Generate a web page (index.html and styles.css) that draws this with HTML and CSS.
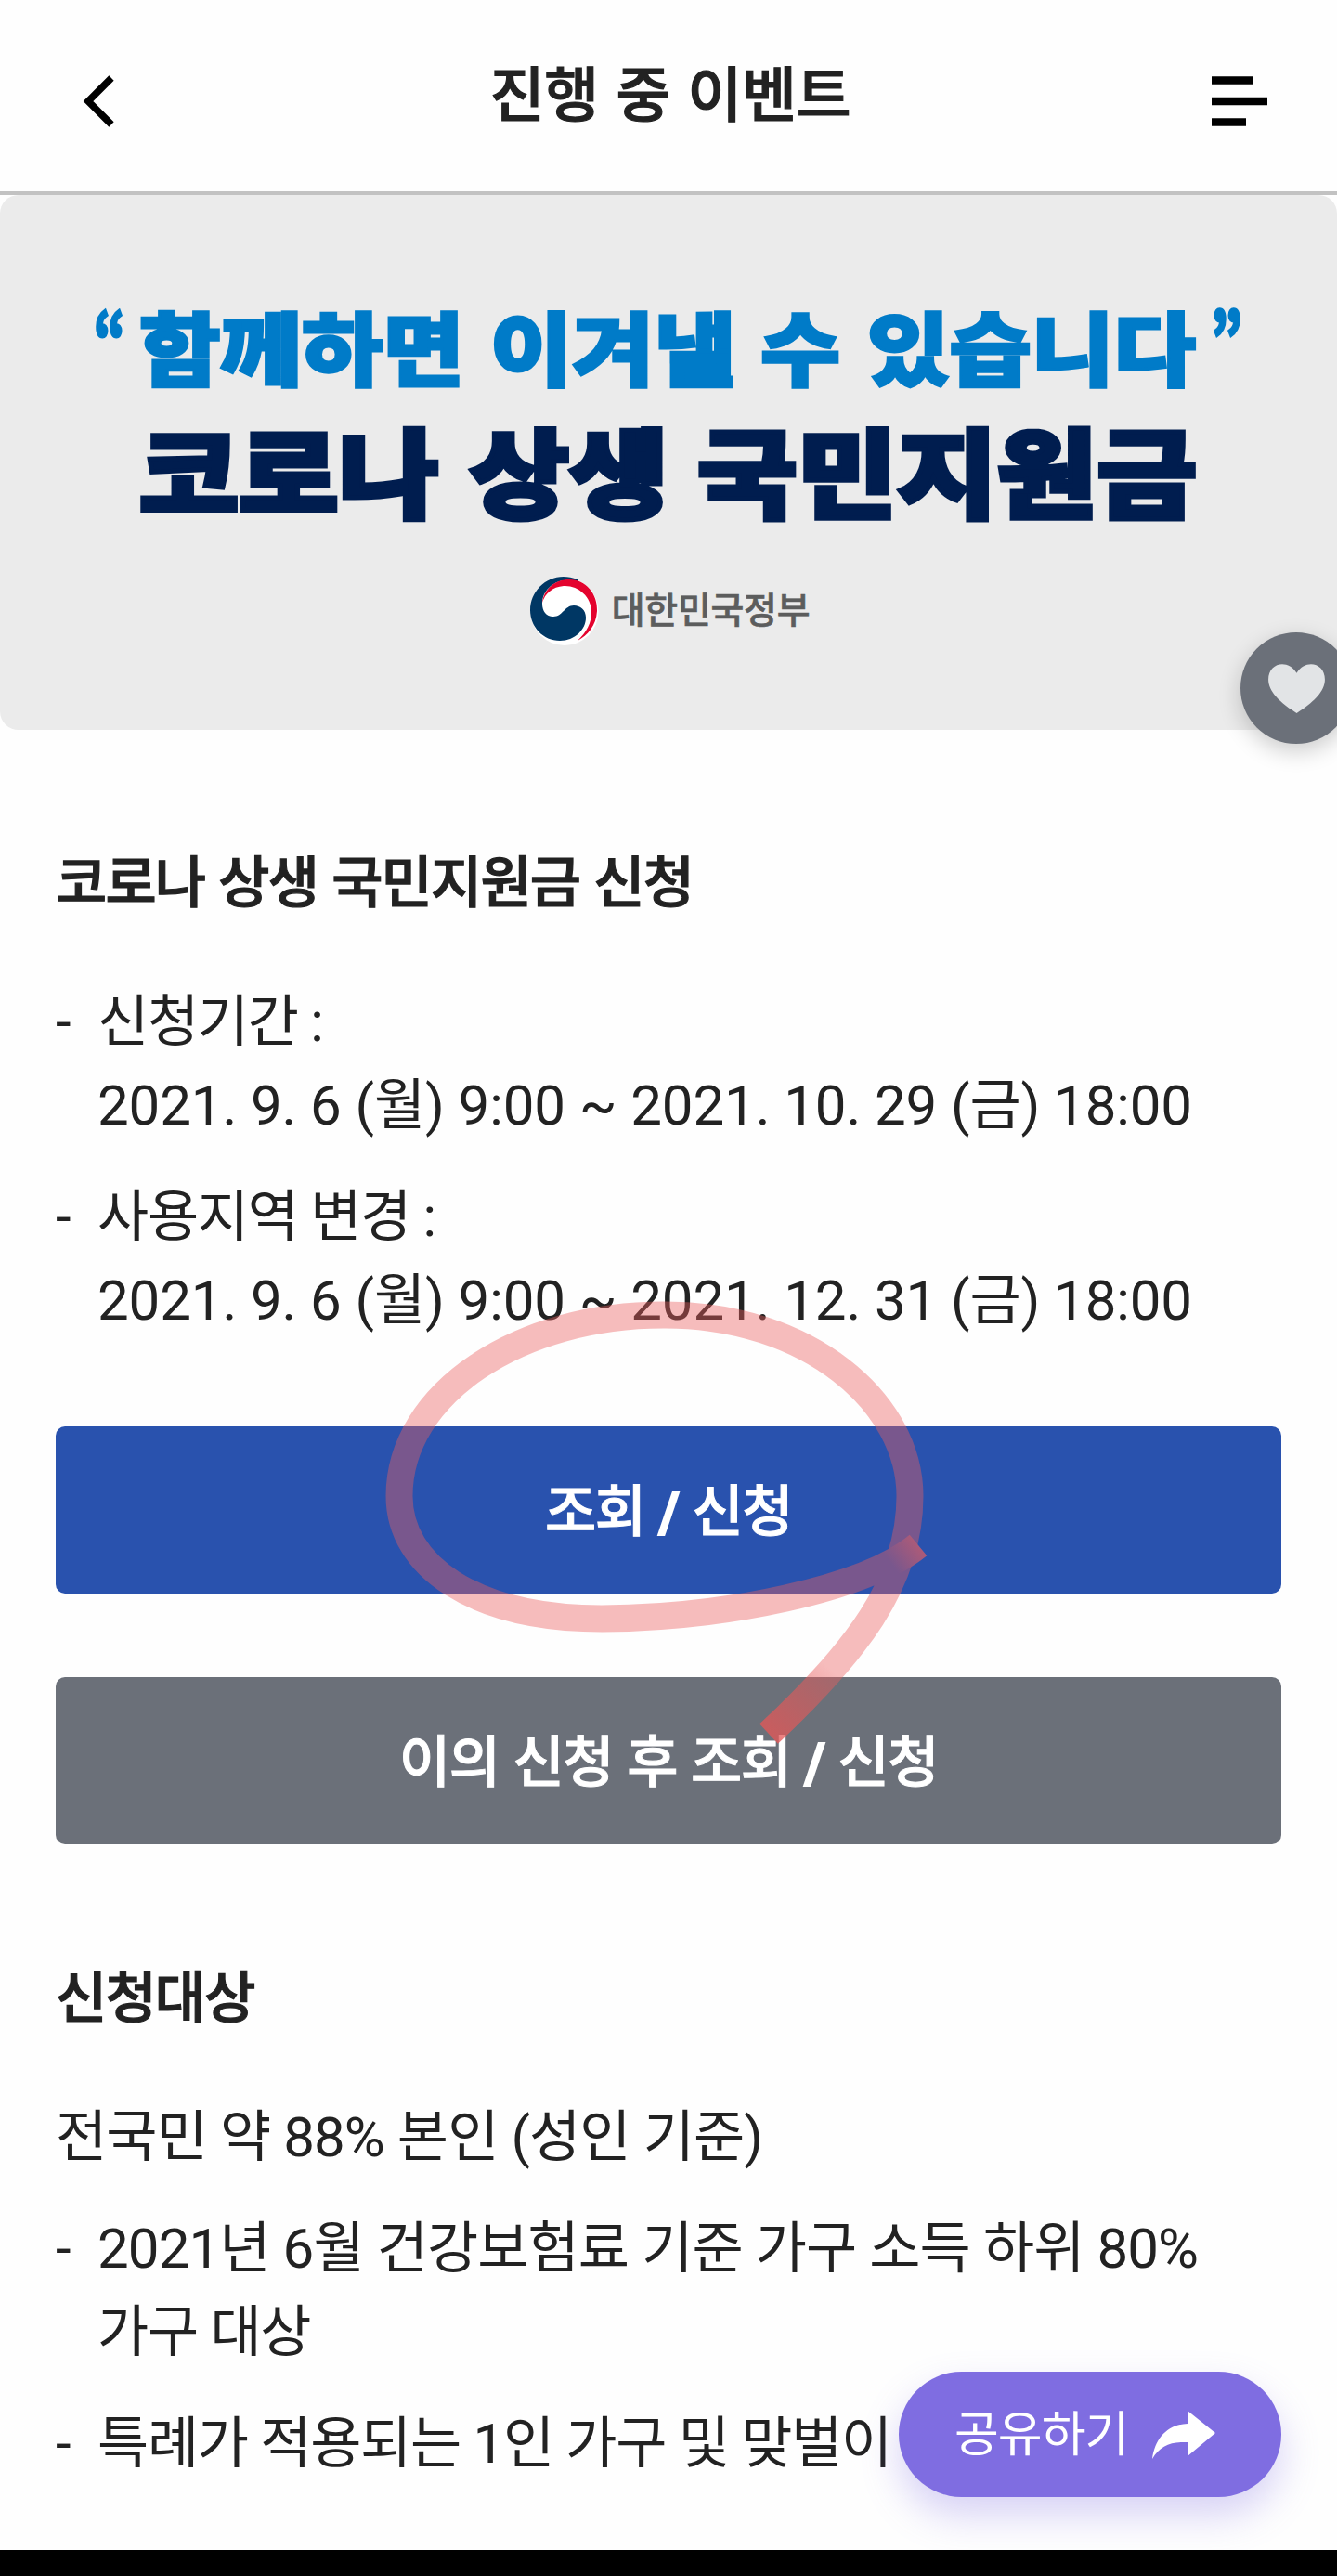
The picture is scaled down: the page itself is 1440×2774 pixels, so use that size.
FILE: index.html
```
<!DOCTYPE html>
<html lang="ko">
<head>
    <meta charset="UTF-8">
    <meta name="viewport" content="width=device-width, initial-scale=1.0">
    <title>진행 중 이벤트</title>
    <link rel="stylesheet" href="styles.css">
</head>
<body>
    <header class="header">
        <svg class="back" viewBox="0 0 34 56"><path d="M31 3 L6 28 L31 53"/></svg>
        <h1>진행 중 이벤트</h1>
        <svg class="menu" viewBox="0 0 60 54"><path d="M0 4.5h45M0 27h60M0 49.5h37"/></svg>
    </header>

    <section class="banner">
        <svg class="slogan" viewBox="0 -60 1440 330">
            <g class="line1">
                <text x="101" y="69" textLength="34" lengthAdjust="spacingAndGlyphs" class="quote">“</text>
                <text x="150" y="88" textLength="350" lengthAdjust="spacingAndGlyphs">함께하면</text>
                <text x="528" y="88" textLength="265" lengthAdjust="spacingAndGlyphs">이겨낼</text>
                <text x="819" y="88" textLength="86" lengthAdjust="spacingAndGlyphs">수</text>
                <text x="934" y="88" textLength="354" lengthAdjust="spacingAndGlyphs">있습니다</text>
                <text x="1304" y="69" textLength="34" lengthAdjust="spacingAndGlyphs" class="quote">”</text>
            </g>
            <g class="line2">
                <text x="150" y="229" textLength="322" lengthAdjust="spacingAndGlyphs">코로나</text>
                <text x="506" y="229" textLength="214" lengthAdjust="spacingAndGlyphs">상생</text>
                <text x="751" y="229" textLength="538" lengthAdjust="spacingAndGlyphs">국민지원금</text>
            </g>
        </svg>
        <div class="gov">
            <svg class="gov-logo" viewBox="0 0 76 76">
                <circle cx="38" cy="38.500" r="36.500" fill="#fff"/>
                <path fill="#003764" d="M52 4 C25 -7 1 13 1 37 C1 55 15 70 33 70 C49 70 61 58 61 45 C61 37 55 32 48 32 C38 32 36 44 26 44 C18 44 14 38 14 30 C14 16 26 6 38 5 C45 4 50 6 53 7 Z"/>
                <path fill="#e4032e" d="M14 29 C16 14 28 4 43 4 C61 4 74 20 73 38 C72 54 63 64 52 70 C62 60 67 51 67 39 C67 22 52 10 37 11 C25 12 17 19 14 29 Z"/>
            </svg>
            <span>대한민국정부</span>
        </div>
        <button class="like">
            <svg viewBox="0 0 62 54"><path d="M31 54 C17 45 0 32 0 17 C0 -1 21 -6 31 10 C41 -6 62 -1 62 17 C62 32 45 45 31 54 Z"/></svg>
        </button>
    </section>

    <main class="content">
        <h2>코로나 상생 국민지원금 신청</h2>
        <ul>
            <li><span class="ko">신청기간 :</span><br>2021. 9. 6 (월) 9:00 ~ 2021. 10. 29 (금) 18:00</li>
            <li><span class="ko">사용지역 변경 :</span><br>2021. 9. 6 (월) 9:00 ~ 2021. 12. 31 (금) 18:00</li>
        </ul>
        <div class="buttons">
            <button class="btn primary">조회 <b>/</b> 신청</button>
            <button class="btn">이의 신청 후 조회 <b>/</b> 신청</button>
            <!-- 형광펜 표시 -->
            <svg class="mark" viewBox="410 1390 600 500">
                <defs>
                    <linearGradient id="g1" gradientUnits="userSpaceOnUse" x1="960" y1="1684" x2="992" y2="1660">
                        <stop offset="0" stop-color="#eb5f5f" stop-opacity="0"/>
                        <stop offset="1" stop-color="#eb5f5f" stop-opacity=".5"/>
                    </linearGradient>
                    <linearGradient id="g2" gradientUnits="userSpaceOnUse" x1="895" y1="1798" x2="832" y2="1866">
                        <stop offset="0" stop-color="#e25555" stop-opacity="0"/>
                        <stop offset="1" stop-color="#e25555" stop-opacity=".6"/>
                    </linearGradient>
                </defs>
                <path class="stroke" d="M989 1664 C930 1712 780 1742 648 1743 C510 1743 430 1686 430 1611 C430 1500 560 1415 717 1416 C870 1416 980 1510 980 1611 C980 1705 921 1780 828 1867"/>
                <path class="tip" stroke="url(#g1)" d="M989 1664 Q977 1674 958 1684"/>
                <path class="tip" stroke="url(#g2)" d="M895 1798 Q868 1830 828 1867"/>
            </svg>
        </div>
        <h2>신청대상</h2>
        <p class="wide">전국민 약 88% 본인 (성인 기준)</p>
        <ul>
            <li class="ko"><span class="wide">2021년 6월 건강보험료 기준 가구 소득 하위 80%</span><br>가구 대상</li>
            <li class="ko">특례가 적용되는 1인 가구 및 맞벌이</li>
        </ul>
    </main>

    <button class="share">
        <span>공유하기</span>
        <svg viewBox="0 0 68 52"><path d="M38 0 L68 24 L38 49 V34 C20 33 8 38 0 52 C3 30 16 15 38 14 Z"/></svg>
    </button>
    <div class="navbar"></div>
</body>
</html>
```
FILE: styles.css
```
* {
    box-sizing: border-box;
}
body {
    margin: 0;
    height: 2774px;
    display: flex;
    flex-direction: column;
    position: relative;
    overflow: hidden;
    background: #fefefe;
    color: #222;
    font-family: Roboto, "Noto Sans CJK KR", sans-serif;
    font-size: 60px;
    line-height: 90px;
}
h1, h2, p, ul {
    margin: 0;
    padding: 0;
}
button {
    border: 0;
    padding: 0;
    font-family: inherit;
    color: #fff;
}
.header {
    height: 210px;
    flex: none;
    display: flex;
    justify-content: space-between;
    padding: 0 75px 0 86px;
    border-bottom: 4px solid #c2c2c2;
}
.header h1 {
    font-size: 64px;
    font-weight: 500;
    line-height: 96px;
    margin-top: 56px;
    letter-spacing: -.3px;
    word-spacing: 3px;
    -webkit-text-stroke: 1.2px #222;
}
.back {
    width: 34px;
    height: 56px;
    margin: 81px 16px 0 3px;
    fill: none;
    stroke: #000;
    stroke-width: 7.5;
}
.menu {
    width: 60px;
    height: 54px;
    margin-top: 82px;
    stroke: #000;
    stroke-width: 8.5;
}
.banner {
    position: relative;
    flex: none;
    height: 576px;
    padding-top: 51px;
    background: #ebebeb;
    border-radius: 20px;
}
.slogan {
    display: block;
    width: 1440px;
    height: 330px;
    margin-bottom: 29px;
    font-family: "Noto Sans CJK KR", sans-serif;
    font-weight: 900;
}
.line1 {
    font-size: 86px;
    fill: #007bc8;
    stroke: #007bc8;
    stroke-width: 3;
}
.quote {
    font-size: 72px;
}
.line2 {
    font-size: 104px;
    fill: #001d4f;
    stroke: #001d4f;
    stroke-width: 5;
}
.gov {
    display: flex;
    align-items: center;
    justify-content: center;
    gap: 13px;
    height: 76px;
    padding-left: 2px;
    font-size: 39px;
    font-weight: 500;
    letter-spacing: -.3px;
    color: #5c5d5d;
    -webkit-text-stroke: .6px #5c5d5d;
}
.gov-logo {
    width: 76px;
    height: 76px;
}
.like {
    position: absolute;
    top: 471px;
    left: 1336px;
    width: 120px;
    height: 120px;
    border-radius: 50%;
    background: #6b7079;
    box-shadow: 0 8px 24px rgba(0, 0, 0, .2);
}
.like svg {
    display: block;
    width: 61px;
    height: 53px;
    margin: 0 auto;
    fill: #e2e4e6;
}
.content {
    padding: 121px 60px 0;
}
h2 {
    font-size: 60px;
    font-weight: 500;
    letter-spacing: -1.8px;
    word-spacing: 2px;
    -webkit-text-stroke: 1.2px #222;
}
.ko {
    letter-spacing: -1.3px;
}
.wide {
    letter-spacing: -.9px;
}
ul {
    list-style: none;
    margin-top: 59px;
}
li {
    position: relative;
    padding-left: 45px;
    white-space: nowrap;
    letter-spacing: -.1px;
}
li.ko {
    letter-spacing: -1.3px;
}
li + li {
    margin-top: 30px;
}
li::before {
    content: "-";
    position: absolute;
    left: 0;
}
.buttons {
    position: relative;
    display: flex;
    flex-direction: column;
    gap: 90px;
    margin: 90px 0 122px;
}
.btn {
    height: 180px;
    padding-bottom: 8px;
    border-radius: 10px;
    background: #6b7079;
    font-size: 60px;
    font-weight: 500;
    letter-spacing: -1.4px;
    word-spacing: 1.5px;
    -webkit-text-stroke: 1px #fff;
}
.btn b {
    -webkit-text-stroke: 2px #fff;
}
.primary {
    background: #2952ae;
}
.mark {
    position: absolute;
    left: 350px;
    top: -146px;
    width: 600px;
    height: 500px;
}
.stroke {
    fill: none;
    stroke: #eb5f5f;
    stroke-opacity: .41;
    stroke-width: 29;
}
.tip {
    fill: none;
    stroke-width: 29;
}
.content p {
    margin-top: 59px;
}
p + ul {
    margin-top: 30px;
}
.share {
    position: absolute;
    left: 968px;
    top: 2554px;
    width: 412px;
    height: 135px;
    display: flex;
    align-items: center;
    padding: 0 60px;
    border-radius: 68px;
    background: #7f6de1;
    font-size: 52px;
    letter-spacing: -1px;
    box-shadow: 0 20px 40px rgba(127, 109, 225, .3);
}
.share span {
    padding-bottom: 8px;
}
.share svg {
    width: 68px;
    height: 52px;
    margin-left: auto;
    margin-right: 11px;
    fill: #fff;
}
.navbar {
    position: absolute;
    left: 0;
    right: 0;
    bottom: 0;
    height: 28px;
    background: #000;
}
```
